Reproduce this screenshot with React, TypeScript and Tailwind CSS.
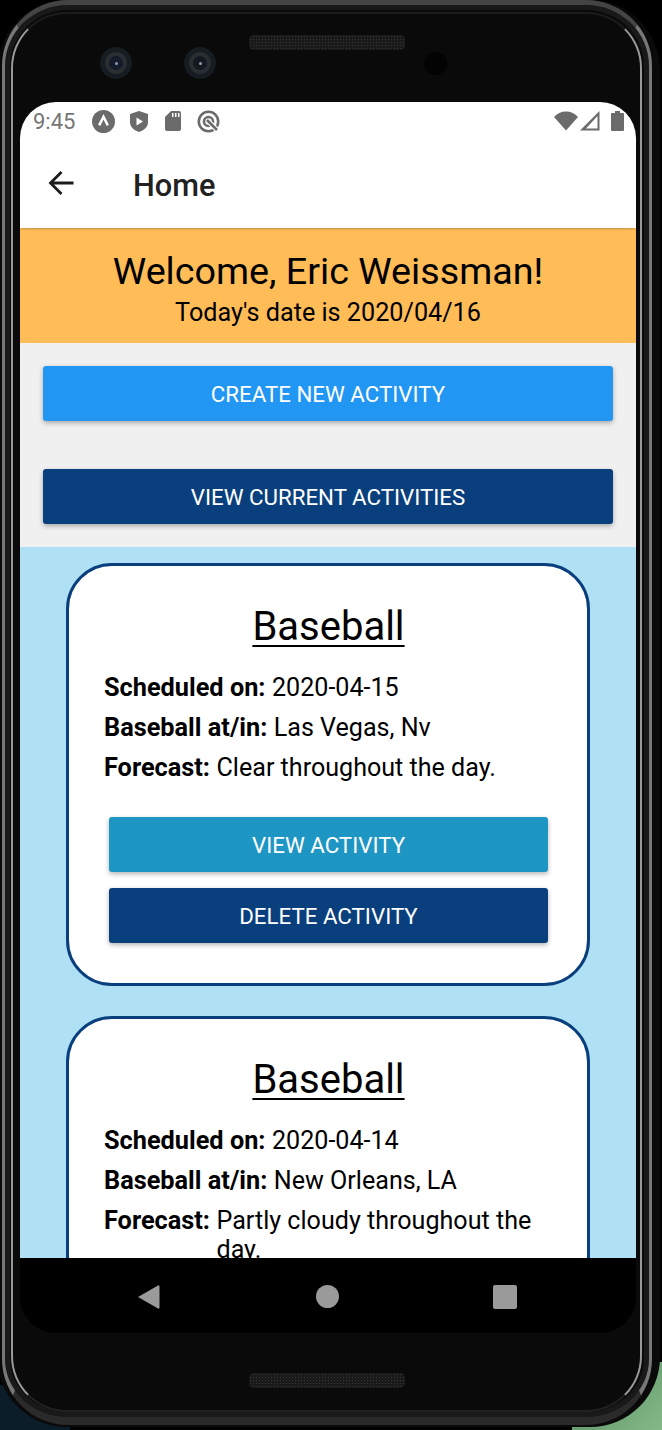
import React from 'react';

const Speaker = () => (
  <div className="h-[15px] w-[156px] rounded-[5px] bg-[#1a1a1a] bg-[radial-gradient(#363636_1px,transparent_1px)] bg-[length:3px_3px]" />
);

const Lens = ({ tint }: { tint: string }) => (
  <div className="flex h-[32px] w-[32px] items-center justify-center rounded-full bg-[#161c21]">
    <div className="flex h-[22px] w-[22px] items-center justify-center rounded-full bg-[#2a2e33]">
      <div className={`flex h-[14px] w-[14px] items-center justify-center rounded-full ${tint}`}>
        <div className="h-[3px] w-[3px] rounded-full bg-[#8f9bb3]" />
      </div>
    </div>
  </div>
);

const StatusBar = () => (
  <div className="flex h-[38px] shrink-0 items-center bg-white pl-[13px] pr-[12px] text-[#6b6b6b]">
    <span className="w-[46px] pt-[2px] font-['Roboto',sans-serif] text-[22px] leading-none text-[#757575]">9:45</span>
    <div className="ml-[13px] flex items-center">
      <svg width="23" height="23" viewBox="0 0 24 24">
        <circle cx="12" cy="12" r="12" fill="#6b6b6b" />
        <path d="M7.5 16 12 7l4.5 9" fill="none" stroke="#fff" strokeWidth="2.6" />
      </svg>
      <svg className="ml-[15px]" width="18" height="21" viewBox="0 0 18 21">
        <path d="M9 0 18 3v8c0 5-4 8.500-9 10-5-1.500-9-5-9-10V3z" fill="#6b6b6b" />
        <path d="M6.500 6.500 13 10.500l-6.500 4z" fill="#fff" />
      </svg>
      <svg className="ml-[17px]" width="16" height="20" viewBox="0 0 16 20">
        <path d="M6 0h8a2 2 0 0 1 2 2v16a2 2 0 0 1-2 2H2a2 2 0 0 1-2-2V6z" fill="#6b6b6b" />
        <path d="M7 2h1.500v4H7zM10 2h1.500v4H10zM13 2h1.500v4H13z" fill="#fff" />
      </svg>
      <svg className="ml-[16px]" width="23" height="23" viewBox="0 0 23 23">
        <circle cx="11.500" cy="11.500" r="9.700" fill="none" stroke="#6b6b6b" strokeWidth="2.600" />
        <circle cx="11.500" cy="11.500" r="4.500" fill="none" stroke="#6b6b6b" strokeWidth="2.600" />
        <path d="m11 11 9 9" stroke="#fff" strokeWidth="5" />
        <path d="m10 10 10 10" stroke="#6b6b6b" strokeWidth="2.600" />
      </svg>
    </div>
    <div className="ml-auto flex items-center">
      <svg width="24" height="20" viewBox="0 0 24 20">
        <path d="M0 6C3 2.500 7 .500 12 .500S21 2.500 24 6L12 19.500z" fill="#6b6b6b" />
      </svg>
      <svg className="ml-[2px]" width="20" height="20" viewBox="0 0 20 20">
        <path fillRule="evenodd" d="M19.500 0v19.500H0zM17.500 5 6 17.500h11.500z" fill="#6b6b6b" />
      </svg>
      <svg className="ml-[11px]" width="13" height="20" viewBox="0 0 13 20">
        <path d="M4 0h5v2h3a1 1 0 0 1 1 1v16a1 1 0 0 1-1 1H1a1 1 0 0 1-1-1V3a1 1 0 0 1 1-1h3z" fill="#6b6b6b" />
      </svg>
    </div>
  </div>
);

const ActionButton = ({ label, className }: { label: string; className: string }) => (
  <div
    className={`flex h-[55px] items-center justify-center rounded-[3px] pt-[2px] font-['Roboto',sans-serif] text-[22.300px] text-white shadow-[0_2px_5px_rgba(0,0,0,0.3)] ${className}`}
  >
    {label}
  </div>
);

const Row = ({ label, value }: { label: string; value: string }) => (
  <div className="flex items-start text-[25.100px] leading-[29px] text-black">
    <span className="shrink-0 text-[25.300px] font-bold">{label}</span>
    <span className="ml-[6.500px]">{value}</span>
  </div>
);

const ActivityCard = ({ date, place, forecast }: { date: string; place: string; forecast: string }) => (
  <div className="mx-[46px] shrink-0 rounded-[46px] border-[3px] border-[#0a3f7d] bg-white pb-[40px] pl-[35px] pr-[34px] pt-[32px] font-['Roboto',sans-serif]">
    <h2 className="text-center text-[40px] leading-[58px] text-black underline decoration-[2px] underline-offset-[5px]">
      Baseball
    </h2>
    <div className="mt-[17px] flex flex-col gap-[11px]">
      <Row label="Scheduled on:" value={date} />
      <Row label="Baseball at/in:" value={place} />
      <Row label="Forecast:" value={forecast} />
    </div>
    <div className="mt-[35px] flex flex-col gap-[16px] px-[5px]">
      <ActionButton label="VIEW ACTIVITY" className="bg-[#1e96c4]" />
      <ActionButton label="DELETE ACTIVITY" className="bg-[#0a3f7d]" />
    </div>
  </div>
);

export default function App() {
  return (
    <div className="relative h-[1430px] w-[662px] overflow-hidden bg-black">
      {/* wallpaper showing behind the device corners */}
      <div className="absolute bottom-0 left-0 h-[45px] w-[70px] bg-[#0b1d28]" />
      <div className="absolute bottom-0 right-0 h-[68px] w-[90px] bg-[linear-gradient(135deg,#4f8a5a,#86b98a)]" />

      {/* device body */}
      <div className="relative -ml-[3px] flex h-[1427px] w-[663px] flex-col rounded-[70px] bg-[#0a0a0a] pl-[23px] pr-[24px]">
        <div className="pointer-events-none absolute bottom-[2px] left-[5px] right-[8px] top-0 rounded-[66px] border-x-[3px] border-b-[8px] border-t-[5px] border-x-[#777] border-b-[#2a2a2a] border-t-[#444] shadow-[inset_0_0_0_5px_#191919]" />
        <div className="pointer-events-none absolute bottom-[15px] left-[14px] right-[18px] top-[12px] rounded-[56px] border-2 border-x-[#999] border-b-[#222] border-t-[#1c1c1c]" />

        <div className="relative flex h-[102px] shrink-0 items-start pl-[80px] pt-[47px]">
          <Lens tint="bg-[#141c2c]" />
          <div className="ml-[52px]">
            <Lens tint="bg-[#14181f]" />
          </div>
          <div className="-mt-[12px] ml-[33px]">
            <Speaker />
          </div>
          <div className="ml-[19px] mt-[5px] h-[23px] w-[23px] rounded-full bg-[#030303]" />
        </div>

        {/* screen */}
        <div className="relative flex h-[1231px] w-[616px] shrink-0 flex-col overflow-hidden rounded-[36px] bg-black">
          <StatusBar />

          <div className="relative z-10 flex h-[88px] shrink-0 items-center bg-white pl-[28px] shadow-[0_2px_2px_-1px_rgba(0,0,0,0.25)]">
            <svg width="26" height="26" viewBox="0 0 26 26" className="-mt-[2px]">
              <path d="M25.500 13H2.500M13.500 2 2.500 13l11 11" fill="none" stroke="#1c1c1c" strokeWidth="2.800" />
            </svg>
            <span className="ml-[59px] pt-[4px] font-['Roboto',sans-serif] text-[30.700px] font-medium text-[#212121]">Home</span>
          </div>

          <div className="flex h-[115px] shrink-0 flex-col items-center justify-center bg-[#ffbc57] pt-[8px] font-['Roboto',sans-serif] text-black">
            <span className="text-[37.700px] leading-[46px]">Welcome, Eric Weissman!</span>
            <span className="text-[25.200px] leading-[38px]">Today's date is 2020/04/16</span>
          </div>

          <div className="flex h-[204px] shrink-0 flex-col gap-[48px] bg-[#f0f0f0] px-[23px] pt-[23px]">
            <ActionButton label="CREATE NEW ACTIVITY" className="bg-[#2196f3]" />
            <ActionButton label="VIEW CURRENT ACTIVITIES" className="bg-[#0a3f7d]" />
          </div>

          <div className="flex h-[711px] shrink-0 flex-col gap-[30px] overflow-hidden bg-[#b0e0f3] pt-[16px]">
            <ActivityCard date="2020-04-15" place="Las Vegas, Nv" forecast="Clear throughout the day." />
            <ActivityCard date="2020-04-14" place="New Orleans, LA" forecast="Partly cloudy throughout the day." />
          </div>

          {/* android nav bar */}
          <div className="flex h-[75px] shrink-0 items-center bg-black pl-[117px] pt-[2px]">
            <svg width="23" height="26" viewBox="0 0 23 26">
              <path d="M1 13 21 1.500a1 1 0 0 1 1.500 1v21a1 1 0 0 1-1.500 1z" fill="#9a9a9a" />
            </svg>
            <div className="ml-[156px] h-[23px] w-[23px] rounded-full bg-[#9a9a9a]" />
            <div className="ml-[154px] h-[24px] w-[24px] rounded-[2px] bg-[#9a9a9a]" />
          </div>
        </div>

        <div className="relative flex flex-1 items-start justify-center pt-[40px]">
          <div className="mr-[2px]">
            <Speaker />
          </div>
        </div>
      </div>
    </div>
  );
}
